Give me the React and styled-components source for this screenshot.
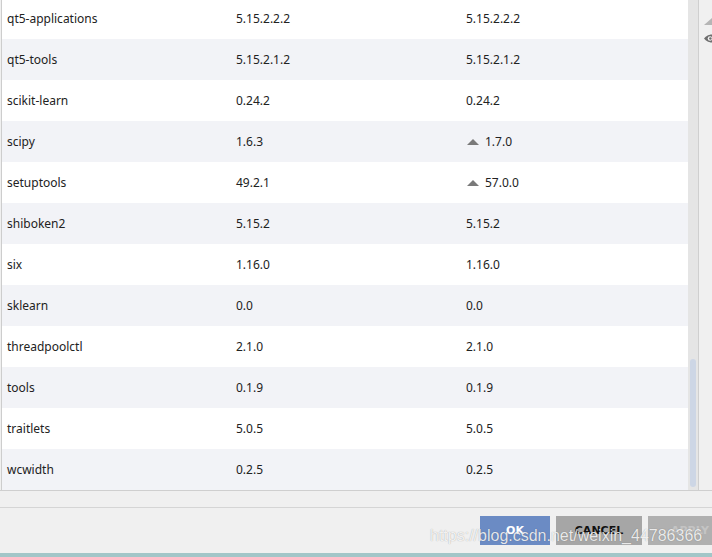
import React from "react";
import styled, { createGlobalStyle } from "styled-components";

const Global = createGlobalStyle`
  html, body {
    margin: 0;
    padding: 0;
    width: 712px;
    height: 557px;
    overflow: hidden;
    background: #f0f0f0;
  }
`;

const Frame = styled.div`
  position: relative;
  width: 712px;
  height: 557px;
  display: flex;
  flex-direction: column;
  font-family: "Noto Sans", "Open Sans", sans-serif;
  background: #f0f0f0;
`;

const Main = styled.div`
  display: flex;
  height: 490px;
  border-bottom: 1px solid #cfcfcf;
`;

const Panel = styled.div`
  flex: 1;
  display: flex;
  margin-left: 1px;
  border-left: 1px solid #cdcdcd;
  background: #fff;
  min-width: 0;
`;

const Rows = styled.div`
  flex: 1;
  overflow: hidden;
`;

const Row = styled.div`
  display: grid;
  grid-template-columns: 229px 230px 1fr;
  align-items: center;
  height: 41px;
  background: ${(p) => (p.$odd ? "#f2f3f7" : "#ffffff")};
  &:first-child {
    margin-top: -2px;
  }
`;

const Cell = styled.div`
  padding-left: 5px;
  font-size: 12px;
  color: #222;
  display: flex;
  align-items: center;
  white-space: nowrap;
`;

const UpArrow = styled.span`
  width: 0;
  height: 0;
  margin: 0 6px 0 1px;
  border-left: 6px solid transparent;
  border-right: 6px solid transparent;
  border-bottom: 6px solid #7a7a7a;
`;

const Track = styled.div`
  width: 10px;
  background: #e5e5e5;
  border-right: 1px solid #cfcfcf;
  display: flex;
  flex-direction: column;
  justify-content: flex-end;
  align-items: center;
  padding-bottom: 3px;
`;

const Thumb = styled.div`
  width: 6px;
  height: 128px;
  border-radius: 3px;
  background: #cdd6e5;
`;

const Side = styled.div`
  width: 13px;
  display: flex;
  flex-direction: column;
  align-items: flex-end;
  padding-top: 18px;
  gap: 9px;
  overflow: hidden;
`;

const Footer = styled.div`
  flex: 1;
  display: flex;
  flex-direction: column;
  padding-top: 16px;
`;

const ButtonBar = styled.div`
  flex: 1;
  display: flex;
  gap: 6px;
  padding: 8px 0 0 480px;
  border-top: 1px solid #d5d5d5;
  overflow: hidden;
`;

const Button = styled.div`
  flex: none;
  width: ${(p) => p.$w}px;
  height: 29px;
  display: flex;
  align-items: center;
  justify-content: center;
  font-family: "DejaVu Sans", sans-serif;
  font-weight: bold;
  font-size: 11px;
  color: ${(p) => p.$fg};
  background: ${(p) => p.$bg};
`;

const Accent = styled.div`
  height: 4px;
  background: #a2c6c8;
`;

const Watermark = styled.div`
  position: absolute;
  left: 430px;
  top: 527px;
  font-family: "Liberation Sans", Arial, sans-serif;
  font-size: 16px;
  color: rgba(255, 255, 255, 0.85);
  text-shadow: 0 0 1px rgba(0, 0, 0, 0.35);
  white-space: nowrap;
`;

const packages = [
  ["qt5-applications", "5.15.2.2.2", "5.15.2.2.2"],
  ["qt5-tools", "5.15.2.1.2", "5.15.2.1.2"],
  ["scikit-learn", "0.24.2", "0.24.2"],
  ["scipy", "1.6.3", "1.7.0", true],
  ["setuptools", "49.2.1", "57.0.0", true],
  ["shiboken2", "5.15.2", "5.15.2"],
  ["six", "1.16.0", "1.16.0"],
  ["sklearn", "0.0", "0.0"],
  ["threadpoolctl", "2.1.0", "2.1.0"],
  ["tools", "0.1.9", "0.1.9"],
  ["traitlets", "5.0.5", "5.0.5"],
  ["wcwidth", "0.2.5", "0.2.5"],
];

const App = () => {
  return (
    <Frame>
      <Global />
      <Main>
        <Panel>
          <Rows>
            {packages.map(([name, version, latest, upgrade], i) => (
              <Row key={name} $odd={i % 2 === 1}>
                <Cell>{name}</Cell>
                <Cell>{version}</Cell>
                <Cell>
                  {upgrade && <UpArrow />}
                  {latest}
                </Cell>
              </Row>
            ))}
          </Rows>
          <Track>
            <Thumb />
          </Track>
        </Panel>
        <Side>
          <svg width="8" height="7" viewBox="0 0 8 7">
            <polygon points="8,0 8,7 0,7" fill="#b5b5b5" />
          </svg>
          <svg width="8" height="9" viewBox="0 0 8 9">
            <path d="M8 0.5 C4 0.5 1.2 3 0 4.5 C1.2 6 4 8.5 8 8.5 Z" fill="#6e6e6e" />
            <circle cx="6" cy="4.5" r="2.3" fill="#f0f0f0" />
            <circle cx="6.4" cy="4.5" r="1.2" fill="#6e6e6e" />
          </svg>
        </Side>
      </Main>
      <Footer>
        <ButtonBar>
          <Button $w={70} $bg="#6b8bc4" $fg="#ffffff">OK</Button>
          <Button $w={86} $bg="#a6a6a6" $fg="#111111">CANCEL</Button>
          <Button $w={84} $bg="#b0b0b0" $fg="#c4c4c4">APPLY</Button>
        </ButtonBar>
        <Accent />
      </Footer>
      <Watermark>https://blog.csdn.net/weixin_44786366</Watermark>
    </Frame>
  );
};

export default App;
